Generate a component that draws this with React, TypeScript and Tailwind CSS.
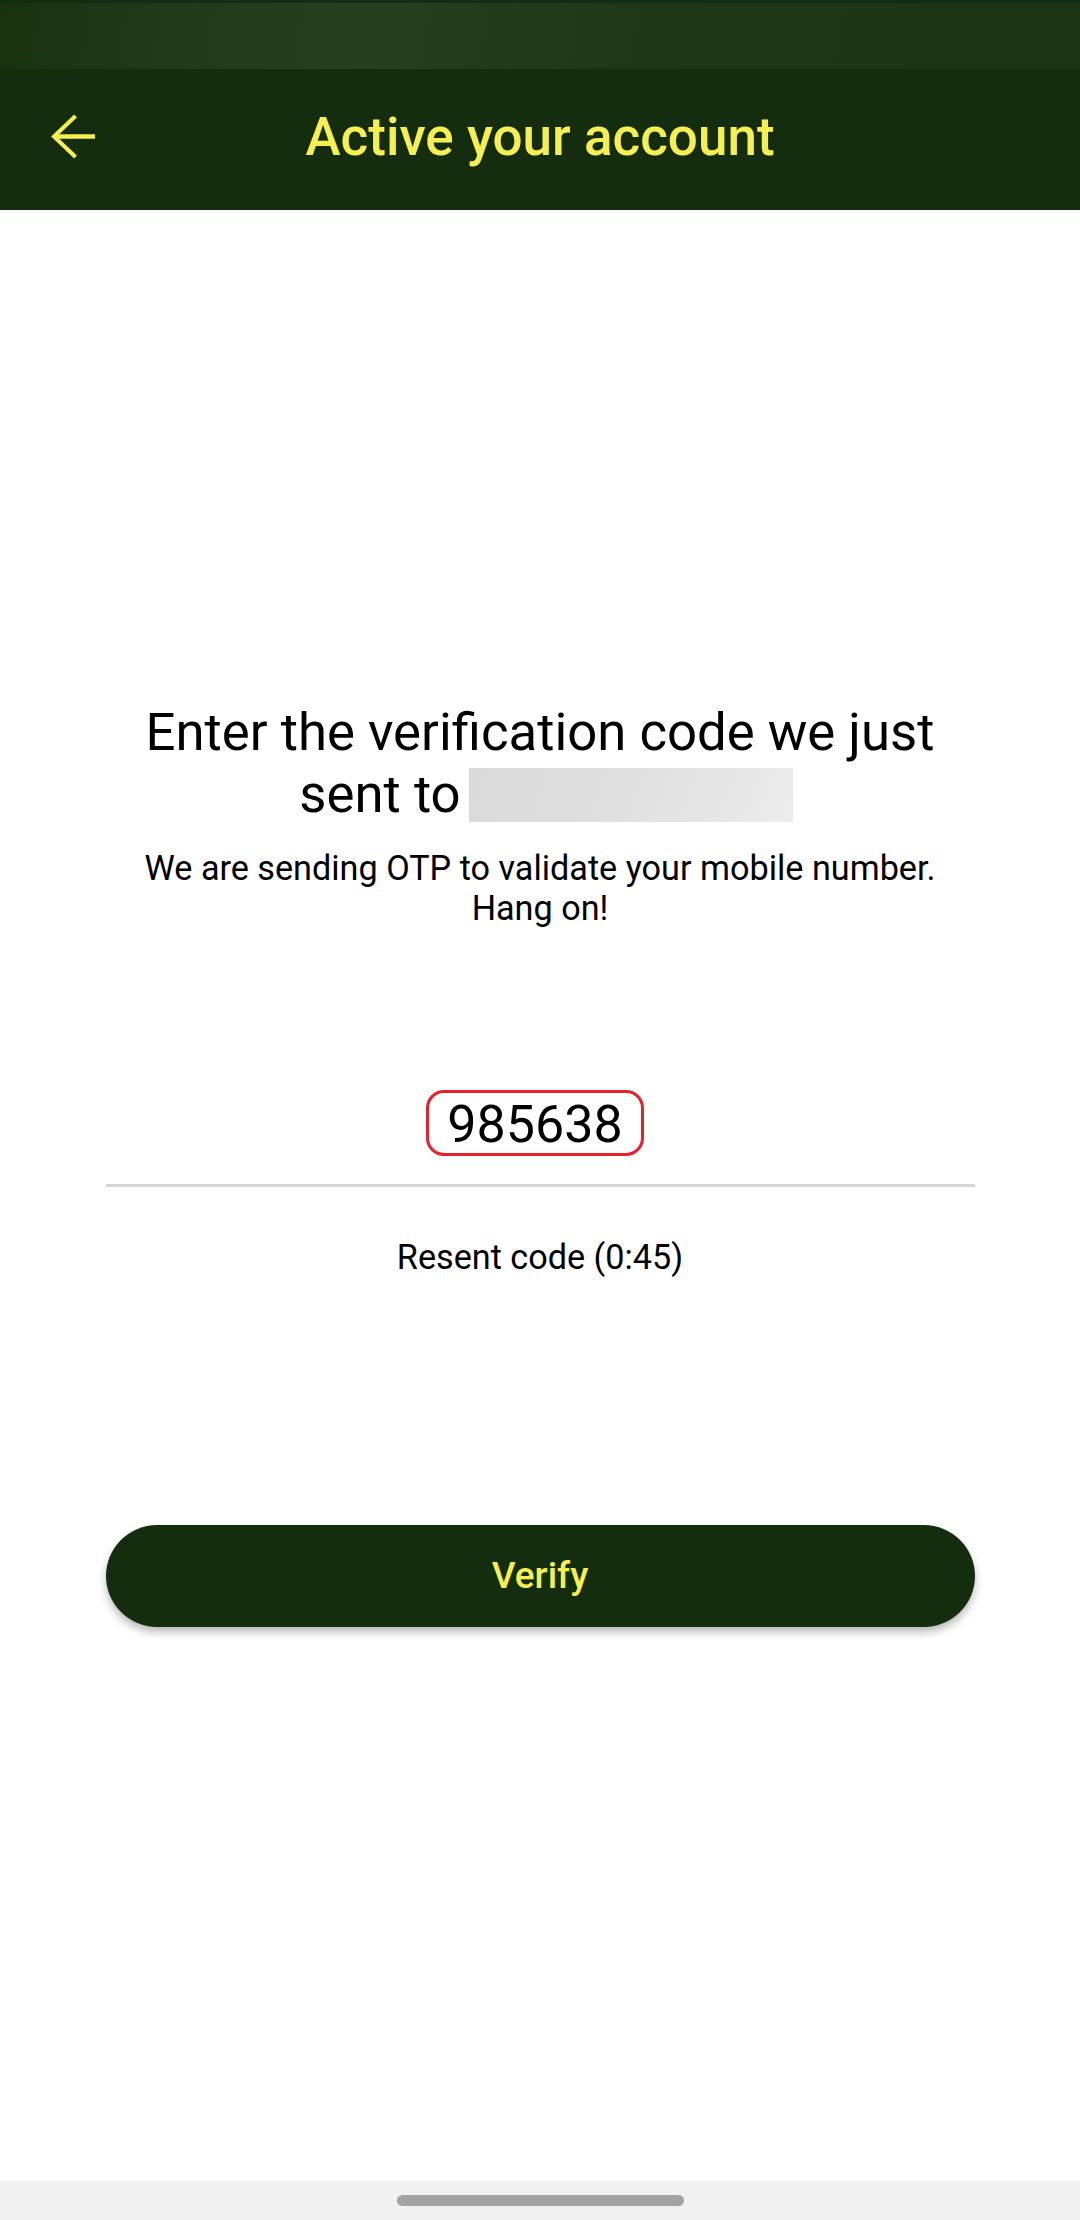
import React from "react";

export default function App() {
  return (
    <div className="w-[1080px] h-[2220px] flex flex-col bg-white font-['Roboto',_sans-serif] overflow-hidden">
      {/* status bar */}
      <div className="h-[69px] border-t-[3px] border-[#142d0e] bg-[linear-gradient(100deg,#19310f_0%,#233c1c_20%,#263f1f_35%,#1f3717_60%,#1c3414_100%)]" />
      {/* header */}
      <div className="h-[141px] bg-[#142d0e] flex items-center relative">
        <button className="absolute left-[50px] top-[44px] w-[47px] h-[47px] flex items-center justify-center">
          <svg width="47" height="47" viewBox="0 0 47 47" fill="none">
            <path d="M4 23.5 H45" stroke="#f6ef52" strokeWidth="4.5" />
            <path d="M25.5 3 L4 23.5 L25.5 44" stroke="#f6ef52" strokeWidth="4" strokeLinejoin="miter" />
          </svg>
        </button>
        <h1 className="flex-1 pb-[5px] text-center text-[53px] font-medium text-[#f6ef52] leading-[62px]">
          Active your account
        </h1>
      </div>

      {/* content */}
      <div className="flex-1 flex flex-col items-center">
        <div className="pt-[491px] text-center text-[52.7px] leading-[62px] text-black">
          <div>Enter the verification code we just</div>
          <div className="pl-[12px]">
            sent to
            <span className="inline-block ml-[8px] w-[324px] h-[54px] align-[-10px] bg-[linear-gradient(110deg,#dadada_0%,#dedede_40%,#ececec_100%)]" />
          </div>
        </div>
        <p className="mt-[23px] text-center text-[34.2px] leading-[40px] text-black">
          We are sending OTP to validate your mobile number.
          <br />
          Hang on!
        </p>

        <div className="mt-[162px] pr-[10px] flex justify-center">
          <span className="inline-block border-[3px] border-[#e8202a] rounded-[18px] px-[18px] pt-[3px] text-[52px] leading-[57px] text-black">
            985638
          </span>
        </div>
        <div className="mt-[28px] w-[869px] h-[3px] bg-[#d5d5d5]" />

        <p className="mt-[50px] text-[34.2px] leading-[41px] text-black">Resent code (0:45)</p>

        <button className="mt-[247px] w-[869px] h-[102px] rounded-full bg-[#142d0e] text-[#f6ef52] text-[37px] font-medium shadow-[0_5px_8px_rgba(0,0,0,0.28)]">
          Verify
        </button>
      </div>

      {/* nav bar */}
      <div className="h-[39px] bg-[#f1f1f1] flex justify-center pt-[14px]">
        <div className="w-[287px] h-[11px] rounded-full bg-[#a3a3a3]" />
      </div>
    </div>
  );
}
